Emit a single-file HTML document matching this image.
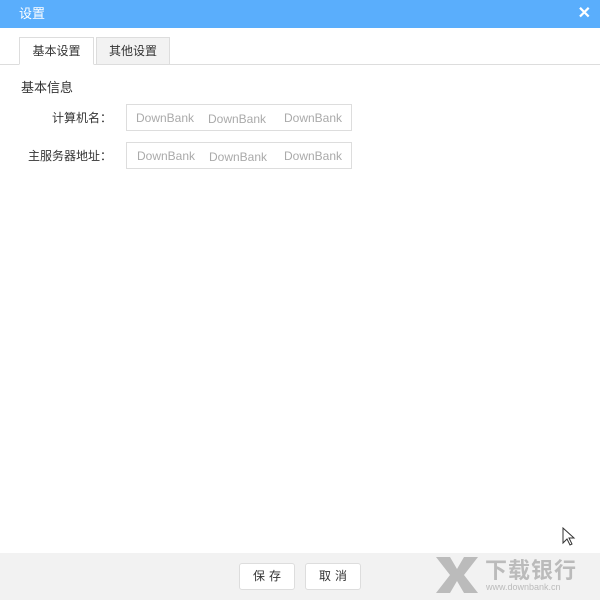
<!DOCTYPE html>
<html><head><meta charset="utf-8"><style>
*{margin:0;padding:0;box-sizing:border-box}
body{width:600px;height:600px;position:relative;background:#fff;font-family:"Liberation Sans","Noto Sans CJK SC",sans-serif;font-size:12px;color:#333;overflow:hidden}
.hdr{position:absolute;left:0;top:0;width:600px;height:28px;background:#5aaefc;color:#fff;font-size:13px;line-height:28px;padding-left:19px}
.x{position:absolute;right:9px;top:0;font-size:16px;font-weight:bold}
.tabline{position:absolute;left:0;top:64px;width:600px;height:1px;background:#ddd}
.tab{position:absolute;top:37px;height:28px;line-height:26px;text-align:center;border:1px solid #ddd;font-size:12px}
.in{position:absolute;left:126px;width:226px;height:27px;border:1px solid #ddd;color:#aaa;font-size:12px}
.in span{position:absolute;top:6px}
.lbl{position:absolute;right:488px;font-size:12px}
.foot{position:absolute;left:0;top:553px;width:600px;height:47px;background:#f2f2f2}
.btn{position:absolute;top:563px;width:56px;height:27px;border:1px solid #ddd;border-radius:3px;background:#fff;text-align:center;line-height:25px;letter-spacing:4px;padding-left:4px}
</style></head><body>
<div class="hdr">设置<span class="x">✕</span></div>
<div class="tabline"></div>
<div class="tab" style="left:19px;width:75px;background:#fff;border-bottom-color:#fff">基本设置</div>
<div class="tab" style="left:96px;width:74px;background:#f2f2f2">其他设置</div>
<div style="position:absolute;left:21px;top:77px;font-size:13px">基本信息</div>
<div class="lbl" style="top:109px">计算机名：</div>
<div class="in" style="top:104px"><span style="left:9px">DownBank</span><span style="left:81px;top:7px">DownBank</span><span style="left:157px">DownBank</span></div>
<div class="lbl" style="top:147px">主服务器地址：</div>
<div class="in" style="top:142px"><span style="left:10px">DownBank</span><span style="left:82px;top:7px">DownBank</span><span style="left:157px">DownBank</span></div>
<svg style="position:absolute;left:562px;top:527px" width="14" height="20" viewBox="0 0 14 20"><path d="M1 1 L1 16 L5 12 L8 18 L10 17 L7 11 L12 11 Z" fill="#fff" stroke="#333"/></svg>
<div class="foot"></div>
<div class="btn" style="left:239px">保存</div>
<div class="btn" style="left:305px">取消</div>
<svg style="position:absolute;left:436px;top:557px" width="42" height="36" viewBox="0 0 42 36"><path d="M0 0 L14 0 L21 12 L28 0 L42 0 L28 18 L42 36 L28 36 L21 24 L14 36 L0 36 L14 18 Z" fill="#bbb"/></svg>
<div style="position:absolute;left:485px;top:553px;font-size:22px;color:#bbb;font-weight:bold;letter-spacing:1px">下载银行</div>
<div style="position:absolute;left:486px;top:582px;font-size:9px;color:#bbb">www.downbank.cn</div>
</body></html>
